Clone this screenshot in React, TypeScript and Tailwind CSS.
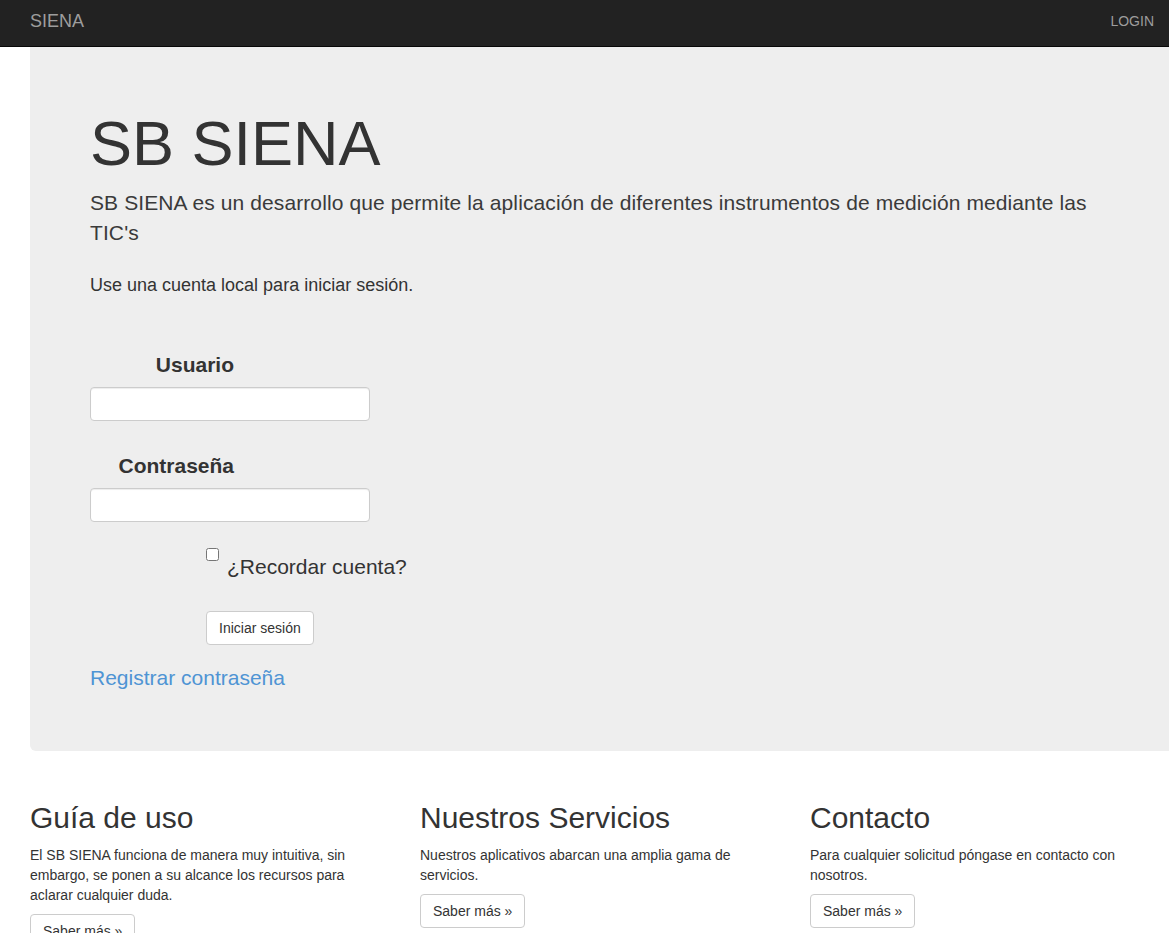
const Navbar = () => {
  return (
    <div className="h-[47px] bg-[#222] border-b border-[#080808] flex justify-between">
      <a className="pl-[30px] pt-[11px] text-[18px] leading-[20px] text-[#9d9d9d]" href="#">
        SIENA
      </a>
      <a className="pr-[15px] pt-[11px] text-[14px] leading-[20px] text-[#9d9d9d]" href="#">
        LOGIN
      </a>
    </div>
  );
};

const LoginForm = () => {
  return (
    <form action="">
      <label className="block w-[144px] text-right mt-[55px] text-[21px] leading-[30px] font-bold">
        Usuario
      </label>
      <input
        className="block mt-[7px] w-[280px] h-[34px] bg-white border border-[#ccc] rounded-[4px] px-3 shadow-[inset_0_1px_1px_rgba(0,0,0,0.075)] focus:outline-none"
        type="text"
      />
      <label className="block w-[144px] text-right mt-[30px] text-[21px] leading-[30px] font-bold">
        Contraseña
      </label>
      <input
        className="block mt-[7px] w-[280px] h-[34px] bg-white border border-[#ccc] rounded-[4px] px-3 shadow-[inset_0_1px_1px_rgba(0,0,0,0.075)] focus:outline-none"
        type="password"
      />
      <div className="flex items-start ml-[116px] mt-[26px]">
        <input className="m-0 w-[13px] h-[13px]" type="checkbox" />
        <span className="ml-[8px] mt-[4px] text-[21px] leading-[30px]">¿Recordar cuenta?</span>
      </div>
      <button
        className="block ml-[116px] mt-[29px] h-[34px] px-3 bg-white border border-[#ccc] rounded-[4px] text-[14px] leading-[20px] text-[#333]"
        type="button"
      >
        Iniciar sesión
      </button>
      <a className="block mt-[18px] text-[21px] leading-[30px] text-[#4f94d4]" href="#">
        Registrar contraseña
      </a>
    </form>
  );
};

const Column = ({ title, text }: { title: string; text: string }) => {
  return (
    <div>
      <h2 className="text-[30px] leading-[33px]">{title}</h2>
      <p className="mt-[11px] text-[14px] leading-[20px]">{text}</p>
      <button className="mt-[9px] h-[34px] px-3 bg-white border border-[#ccc] rounded-[4px] text-[14px] leading-[20px] text-[#333]">
        Saber más »
      </button>
    </div>
  );
};

const App = () => {
  return (
    <div className="h-screen overflow-hidden bg-white text-[#333] font-['Liberation_Sans',Arial,sans-serif]">
      <Navbar />
      <div className="ml-[30px] mr-[-20px] bg-[#eee] rounded-bl-[6px] pl-[60px] pt-[62px] pb-[58px]">
        <h1 className="text-[63px] leading-[69px]">SB SIENA</h1>
        <p className="mt-[10px] w-[1010px] text-[21px] leading-[30px] tracking-[0.1px] text-[#3a3a3a]">
          SB SIENA es un desarrollo que permite la aplicación de diferentes instrumentos de medición mediante las TIC's
        </p>
        <h4 className="mt-[27px] text-[18px] leading-[20px]">Use una cuenta local para iniciar sesión.</h4>
        <LoginForm />
      </div>
      <div className="ml-[30px] mt-[50px] grid grid-cols-[360px_360px_360px] gap-x-[30px]">
        <Column
          title="Guía de uso"
          text="El SB SIENA funciona de manera muy intuitiva, sin embargo, se ponen a su alcance los recursos para aclarar cualquier duda."
        />
        <Column title="Nuestros Servicios" text="Nuestros aplicativos abarcan una amplia gama de servicios." />
        <Column title="Contacto" text="Para cualquier solicitud póngase en contacto con nosotros." />
      </div>
    </div>
  );
};

export default App;
